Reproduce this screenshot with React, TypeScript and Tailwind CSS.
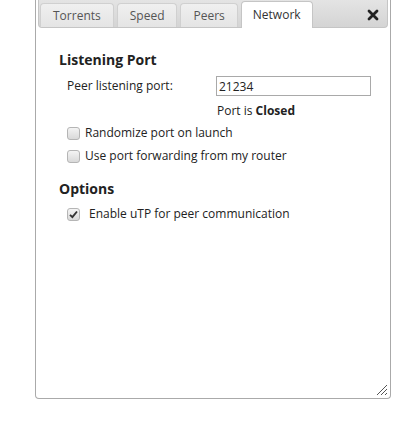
import React, { useState } from "react";

const tabs = ["Torrents", "Speed", "Peers", "Network"];

const Check: React.FC<{ checked: boolean; onToggle: () => void }> = ({ checked, onToggle }) => (
    <span
        onClick={onToggle}
        className="w-[13px] h-[13px] shrink-0 rounded-[3px] border border-[#b5b5b5] bg-gradient-to-b from-[#f4f4f4] to-[#d9d9d9] flex items-center justify-center cursor-pointer"
    >
        {checked && (
            <svg width="9" height="9" viewBox="0 0 9 9">
                <path d="M1 4.8 L3.4 7.2 L8 1.5" stroke="#333" strokeWidth="1.9" fill="none" />
            </svg>
        )}
    </span>
);

const App: React.FC = () => {
    const [active, setActive] = useState<string>("Network");
    const [port, setPort] = useState<string>("21234");
    const [random, setRandom] = useState<boolean>(false);
    const [forward, setForward] = useState<boolean>(false);
    const [utp, setUtp] = useState<boolean>(true);

    return (
        <div className="w-[416px] h-[441px] bg-white font-['Open_Sans',sans-serif] text-[12px] text-[#222]">
            <div className="ml-[35px] w-[356px] h-[399px] border border-[#aaa] border-t-0 rounded-b-[4px] relative flex flex-col">
                {/* tab strip */}
                <div className="mx-[2px] h-[28px] flex items-end justify-between pl-[1px] pr-[2px] bg-gradient-to-b from-[#e4e4e4] to-[#d4d4d4] border border-t-0 border-[#c5c5c5] rounded-b-[4px]">
                    <div className="flex items-end gap-[3px]">
                        {tabs.map((t) => (
                            <div
                                key={t}
                                onClick={() => setActive(t)}
                                className={
                                    t === active
                                        ? "h-[27px] px-[11px] pt-[4px] bg-white border border-b-0 border-[#c5c5c5] rounded-t-[4px] text-[#333] cursor-pointer -mb-[1px]"
                                        : "h-[24px] px-[12px] pt-[3px] bg-gradient-to-b from-[#f0f0f0] to-[#e4e4e4] border border-b-0 border-[#d0d0d0] rounded-t-[4px] text-[#555] cursor-pointer"
                                }
                            >
                                {t}
                            </div>
                        ))}
                    </div>
                    <div className="self-center pr-[6px] pt-[2px] cursor-pointer">
                        <svg width="12" height="12" viewBox="0 0 12 12">
                            <path d="M2 2 L10 10 M10 2 L2 10" stroke="#222" strokeWidth="2.8" strokeLinecap="round" />
                        </svg>
                    </div>
                </div>

                <div className="pl-[23px] pr-[19px] pt-[23px]">
                    <h3 className="text-[14px] font-bold text-[#222] leading-[18px]">Listening Port</h3>
                    <div className="pl-[8px] mt-[7px]">
                        <div className="flex items-center h-[20px]">
                            <span className="w-[149px]">Peer listening port:</span>
                            <input
                                value={port}
                                onChange={(e) => setPort(e.target.value)}
                                className="w-[155px] h-[20px] border border-[#a9a9a9] px-[2px] text-[12px] outline-none"
                            />
                        </div>
                        <div className="pl-[150px] mt-[6px] h-[18px]">
                            Port is <b>Closed</b>
                        </div>
                        <label className="flex items-center gap-[5px] mt-[3px] h-[20px]">
                            <Check checked={random} onToggle={() => setRandom(!random)} />
                            <span>Randomize port on launch</span>
                        </label>
                        <label className="flex items-center gap-[5px] mt-[3px] h-[20px]">
                            <Check checked={forward} onToggle={() => setForward(!forward)} />
                            <span>Use port forwarding from my router</span>
                        </label>
                    </div>

                    <h3 className="text-[14px] font-bold text-[#222] leading-[18px] mt-[14px]">Options</h3>
                    <div className="pl-[8px] mt-[6px]">
                        <label className="flex items-center gap-[9px] h-[20px]">
                            <Check checked={utp} onToggle={() => setUtp(!utp)} />
                            <span>Enable uTP for peer communication</span>
                        </label>
                    </div>
                </div>

                {/* resize grip */}
                <svg className="absolute right-[2px] bottom-[2px]" width="12" height="12" viewBox="0 0 12 12">
                    <path d="M11 1 L1 11 M11 5 L5 11 M11 9 L9 11" stroke="#555" strokeWidth="1" />
                </svg>
            </div>
        </div>
    );
};

export default App;
